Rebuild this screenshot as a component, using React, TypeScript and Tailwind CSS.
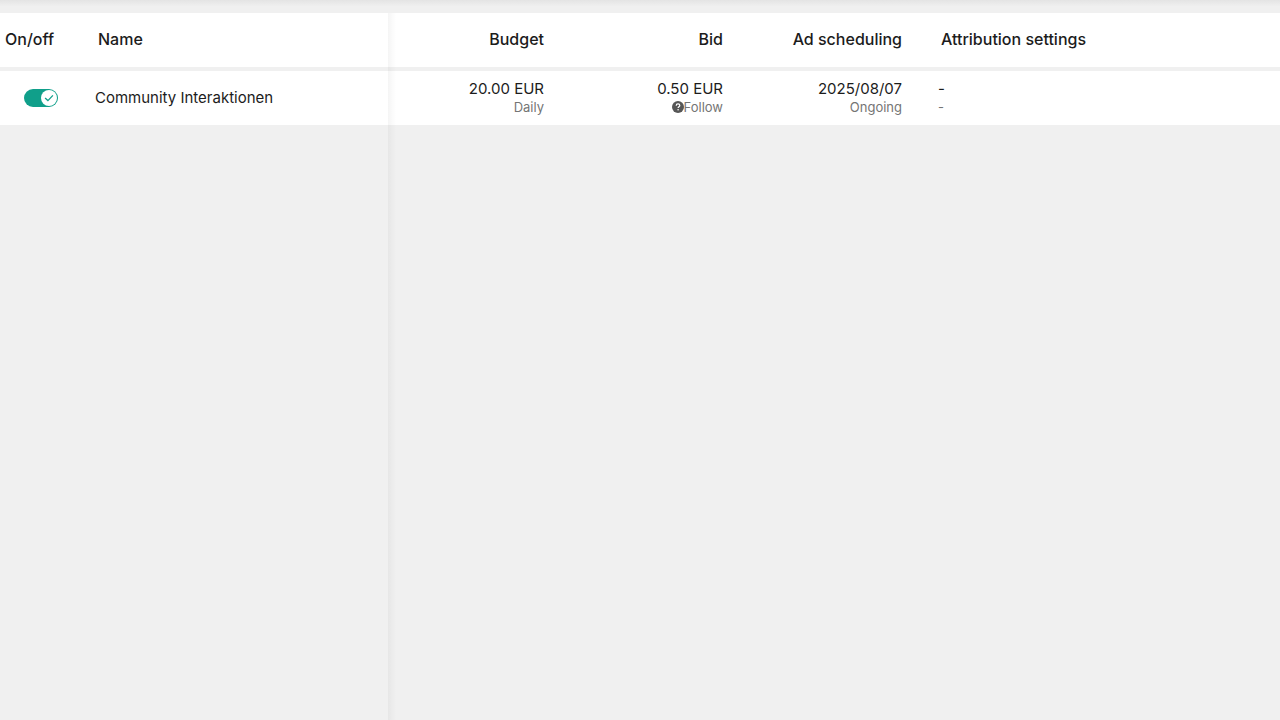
import { useState } from 'react'

type Campaign = {
    id: string
    name: string
    budget: string
    budgetType: string
    bid: string
    bidGoal: string
    schedule: string
    scheduleNote: string
}

const campaigns: Campaign[] = [
    {
        id: 'community',
        name: 'Community Interaktionen',
        budget: '20.00 EUR',
        budgetType: 'Daily',
        bid: '0.50 EUR',
        bidGoal: 'Follow',
        schedule: '2025/08/07',
        scheduleNote: 'Ongoing',
    },
]

const Toggle = ({ label }: { label: string }) => {
    const [on, setOn] = useState(true)

    return (
        <label className={`flex h-[18px] w-[34px] cursor-pointer items-center rounded-full p-px ${on ? 'justify-end bg-[#109f8a]' : 'justify-start bg-[#b4b4b4]'}`}>
            <input
                type="checkbox"
                className="sr-only"
                checked={on}
                onChange={() => setOn(!on)}
                aria-label={label}
            />
            <svg viewBox="0 0 16 16" className="size-4" aria-hidden="true">
                <circle cx="8" cy="8" r="8" fill="#fff" />
                {on && <path d="M4.1 8.1 6.9 10.6l5-5.2" fill="none" stroke="#109f8a" strokeWidth="1.3" />}
            </svg>
        </label>
    )
}

const HelpIcon = () => (
    <svg viewBox="0 0 12 12" className="size-3" aria-hidden="true">
        <circle cx="6" cy="6" r="6" fill="#565656" />
        <path
            d="M4.2 4.7C4.2 3.5 5 2.9 6 2.9s1.8.6 1.8 1.6c0 1.2-1.7 1.3-1.7 2.5"
            fill="none"
            stroke="#fff"
            strokeWidth="1.2"
        />
        <circle cx="6.1" cy="8.8" r="0.8" fill="#fff" />
    </svg>
)

const App = () => {
    return (
        <div className="relative min-h-screen bg-[#f0f0f0] font-['Inter','Liberation_Sans',sans-serif] text-[#1c1c1c]">
            <div className="h-[13px] bg-linear-to-b from-[#e4e4e4] to-[#f0f0f0] to-50%" />

            <table className="w-full table-fixed border-separate border-spacing-0 text-[15px] leading-5">
                <colgroup>
                    <col className="w-[83px]" />
                    <col className="w-[305px]" />
                    <col className="w-[180px]" />
                    <col className="w-[179px]" />
                    <col className="w-[179px]" />
                    <col />
                </colgroup>
                <thead>
                    <tr className="h-[58px] bg-white text-base *:border-b-4 *:border-[#f0f0f0] *:pb-0.5 *:font-medium">
                        <th className="pl-[5px] text-left">On/off</th>
                        <th className="pl-[15px] text-left">Name</th>
                        <th className="pr-6 text-right">Budget</th>
                        <th className="pr-6 text-right">Bid</th>
                        <th className="pr-6 text-right">Ad scheduling</th>
                        <th className="pl-[15px] text-left">Attribution settings</th>
                    </tr>
                </thead>
                <tbody>
                    {campaigns.map((c) => (
                        <tr key={c.id} className="h-[54px] bg-white">
                            <td className="pl-6">
                                <Toggle label={c.name} />
                            </td>
                            <td className="pl-3">{c.name}</td>
                            <td className="pr-6 pb-0.5 text-right">
                                <div>{c.budget}</div>
                                <div className="text-[13px] leading-4 text-[#757575]">{c.budgetType}</div>
                            </td>
                            <td className="pr-6 pb-0.5 text-right">
                                <div>{c.bid}</div>
                                <div className="flex items-center justify-end text-[13px] leading-4 text-[#757575]">
                                    <HelpIcon />
                                    {c.bidGoal}
                                </div>
                            </td>
                            <td className="pr-6 pb-0.5 text-right">
                                <div>{c.schedule}</div>
                                <div className="text-[13px] leading-4 text-[#757575]">{c.scheduleNote}</div>
                            </td>
                            <td className="pb-0.5 pl-3">
                                <div>-</div>
                                <div className="text-[13px] leading-4 text-[#757575]">-</div>
                            </td>
                        </tr>
                    ))}
                </tbody>
            </table>

            {/* shadow cast by the pinned columns */}
            <div className="pointer-events-none absolute top-[13px] bottom-0 left-[388px] w-2 bg-linear-to-r from-black/4 to-transparent" />
        </div>
    )
}

export default App
